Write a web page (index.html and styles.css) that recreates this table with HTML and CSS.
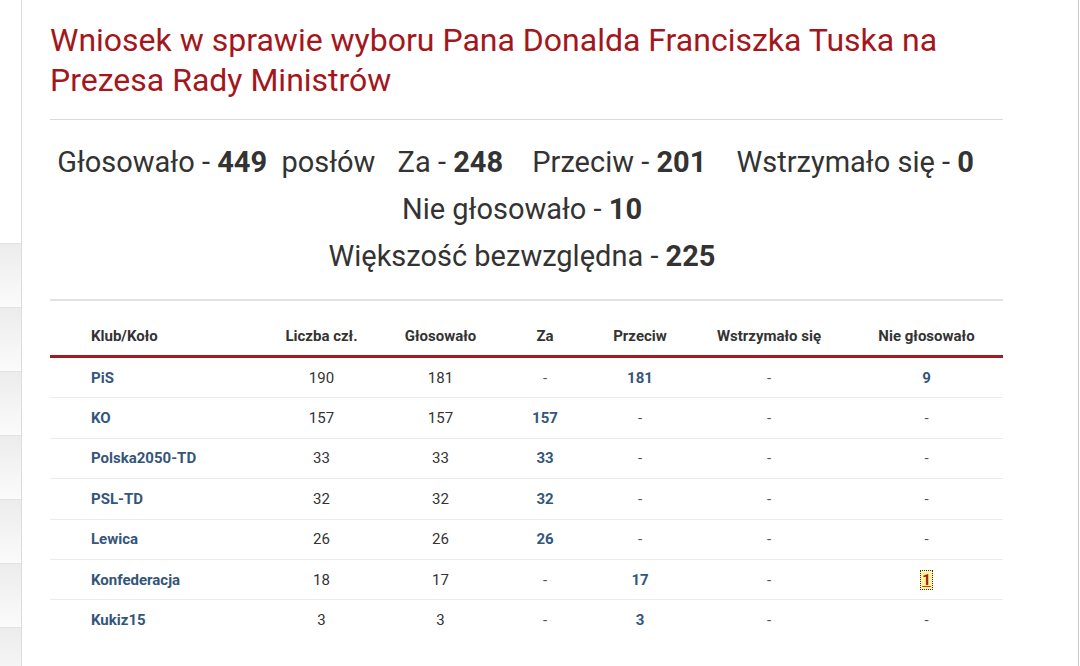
FILE: index.html
```html
<!DOCTYPE html>
<html lang="pl">
<head>
<meta charset="utf-8">
<title>Głosowanie</title>
<link rel="stylesheet" href="styles.css">
</head>
<body>
<aside class="sidebar">
  <div class="side-item"></div>
  <div class="side-item"></div>
  <div class="side-item"></div>
  <div class="side-item"></div>
  <div class="side-item"></div>
  <div class="side-item"></div>
  <div class="side-item"></div>
</aside>
<main class="main">
  <div class="content">
    <h1 class="title">Wniosek w sprawie wyboru Pana Donalda Franciszka Tuska na Prezesa Rady Ministrów</h1>
    <hr class="rule">
    <p class="stats">
      <span class="stat">Głosowało - <b>449</b>&nbsp; posłów</span>
      <span class="stat s2">Za - <b>248</b></span>
      <span class="stat s3">Przeciw - <b>201</b></span>
      <span class="stat s4">Wstrzymało się - <b>0</b></span><br>
      <span class="stat">Nie głosowało - <b>10</b></span><br>
      <span class="stat">Większość bezwzględna - <b>225</b></span>
    </p>
    <hr class="rule rule2">
    <table class="votes">
      <colgroup>
        <col class="c1"><col class="c2"><col class="c3"><col class="c4"><col class="c5"><col class="c6"><col class="c7">
      </colgroup>
      <thead>
        <tr>
          <th class="club-h">Klub/Koło</th>
          <th>Liczba czł.</th>
          <th>Głosowało</th>
          <th>Za</th>
          <th>Przeciw</th>
          <th>Wstrzymało się</th>
          <th>Nie głosowało</th>
        </tr>
      </thead>
      <tbody>
        <tr><td class="club">PiS</td><td>190</td><td>181</td><td class="dash">-</td><td class="hl">181</td><td class="dash">-</td><td class="hl">9</td></tr>
        <tr><td class="club">KO</td><td>157</td><td>157</td><td class="hl">157</td><td class="dash">-</td><td class="dash">-</td><td class="dash">-</td></tr>
        <tr><td class="club">Polska2050-TD</td><td>33</td><td>33</td><td class="hl">33</td><td class="dash">-</td><td class="dash">-</td><td class="dash">-</td></tr>
        <tr><td class="club">PSL-TD</td><td>32</td><td>32</td><td class="hl">32</td><td class="dash">-</td><td class="dash">-</td><td class="dash">-</td></tr>
        <tr><td class="club">Lewica</td><td>26</td><td>26</td><td class="hl">26</td><td class="dash">-</td><td class="dash">-</td><td class="dash">-</td></tr>
        <tr><td class="club">Konfederacja</td><td>18</td><td>17</td><td class="dash">-</td><td class="hl">17</td><td class="dash">-</td><td class="hl"><span class="mark">1</span></td></tr>
        <tr><td class="club">Kukiz15</td><td>3</td><td>3</td><td class="dash">-</td><td class="hl">3</td><td class="dash">-</td><td class="dash">-</td></tr>
      </tbody>
    </table>
  </div>
</main>
</body>
</html>
```

FILE: styles.css
```css
html, body {
  margin: 0;
  padding: 0;
  background: #fff;
}
body {
  width: 1080px;
  height: 666px;
  overflow: hidden;
  display: flex;
  font-family: Roboto, "Liberation Sans", sans-serif;
  color: #333;
}
.sidebar {
  width: 21px;
  flex-shrink: 0;
  border-right: 1px solid #dcdcdc;
  padding-top: 243px;
}
.side-item {
  height: 63px;
  border-top: 1px solid #e2e2e2;
  background: linear-gradient(#ececec, #fbfbfb);
}
.main {
  width: 1057px;
  flex-shrink: 0;
  box-sizing: border-box;
  border-right: 1px solid #c9c9c9;
  padding: 20px 0 0 28px;
}
.content {
  width: 953px;
}
.title {
  margin: 0;
  font-size: 32px;
  line-height: 40px;
  font-weight: 400;
  color: #a3171c;
}
.rule {
  border: 0;
  border-top: 1px solid #dadada;
  margin: 19px 0 0;
  height: 0;
}
.rule2 {
  border-top: 2px solid #e2e2e2;
  margin-top: 0;
}
.stats {
  margin: 0;
  padding: 19px 9px 19px 0;
  text-align: center;
  font-size: 29px;
  line-height: 47px;
  color: #333;
}
.stats b {
  font-weight: 700;
}
.s2 { margin-left: 15px; }
.s3 { margin-left: 22px; }
.s4 { margin-left: 23px; margin-right: 13px; }
.votes {
  margin-top: 13px;
  width: 953px;
  border-collapse: collapse;
  table-layout: fixed;
  font-size: 15px;
}
.c1 { width: 210px; }
.c2 { width: 123px; }
.c3 { width: 115px; }
.c4 { width: 94px; }
.c5 { width: 96px; }
.c6 { width: 162px; }
.c7 { width: 153px; }
.votes th {
  height: 39px;
  padding: 2px 0 0;
  font-weight: 700;
  color: #333;
  text-align: center;
  border-bottom: 3px solid #a01c21;
}
.votes th.club-h {
  text-align: left;
  padding-left: 41px;
}
.votes td {
  height: 39.4px;
  padding: 0;
  text-align: center;
  color: #333;
  border-bottom: 1px solid #ececec;
}
.votes tbody tr:last-child td {
  border-bottom: 0;
}
.votes td.club {
  text-align: left;
  padding-left: 41px;
  font-weight: 700;
  color: #34567a;
}
.votes td.hl {
  font-weight: 700;
  color: #34567a;
}
.votes td.dash {
  color: #555;
}
.mark {
  display: inline-block;
  background: #fff3a0;
  color: #9a1d12;
  border: 1px dotted #333;
  line-height: 18px;
  padding: 0 1px;
  text-decoration: underline;
  text-decoration-color: #c0392b;
}
```
